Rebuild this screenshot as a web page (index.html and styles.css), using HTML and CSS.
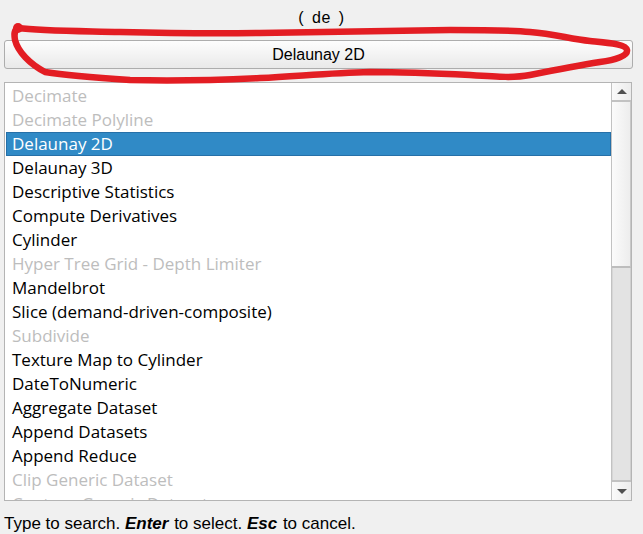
FILE: index.html
```html
<!DOCTYPE html>
<html>
<head>
<meta charset="utf-8">
<link rel="stylesheet" href="styles.css">
</head>
<body>
<div class="dialog">
  <div class="query">( de )</div>
  <div class="current-btn">Delaunay 2D</div>
  <div class="listbox">
    <div class="items">
      <div class="item disabled">Decimate</div>
      <div class="item disabled">Decimate Polyline</div>
      <div class="item selected">Delaunay 2D</div>
      <div class="item">Delaunay 3D</div>
      <div class="item">Descriptive Statistics</div>
      <div class="item">Compute Derivatives</div>
      <div class="item">Cylinder</div>
      <div class="item disabled">Hyper Tree Grid - Depth Limiter</div>
      <div class="item">Mandelbrot</div>
      <div class="item">Slice (demand-driven-composite)</div>
      <div class="item disabled">Subdivide</div>
      <div class="item">Texture Map to Cylinder</div>
      <div class="item">DateToNumeric</div>
      <div class="item">Aggregate Dataset</div>
      <div class="item">Append Datasets</div>
      <div class="item">Append Reduce</div>
      <div class="item disabled">Clip Generic Dataset</div>
      <div class="item disabled">Contour Generic Dataset</div>
    </div>
    <div class="scrollbar">
      <div class="arrow up"><span class="tri-up"></span></div>
      <div class="thumb"></div>
      <div class="track"></div>
      <div class="arrow down"><span class="tri-down"></span></div>
    </div>
  </div>
  <div class="hint">Type to search. <b>Enter</b>&nbsp;to select. <b>Esc</b>&nbsp;to cancel.</div>
</div>
<svg class="annotation" width="643" height="534" viewBox="0 0 643 534">
  <path d="M 18 28 C 40 31, 80 31, 120 32 C 160 33, 200 34, 260 33 C 340 32, 400 31, 450 30 C 480 30, 510 30, 530 32 C 555 34, 570 39, 590 41 C 610 43, 626 44, 627 50 C 628 56, 615 60, 600 62 C 575 66, 555 70, 530 75 C 515 78, 500 77, 470 75 C 430 73, 400 72, 370 72 C 330 73, 300 76, 260 78 C 220 80, 170 81, 130 80 C 100 78, 70 76, 45 72 C 30 64, 18 52, 15 40 C 14 34, 14 30, 18 28 Z" fill="none" stroke="#e31d23" stroke-width="6.5" stroke-linejoin="round" stroke-linecap="round"/>
  <circle cx="18" cy="28" r="5" fill="#e31d23"/>
</svg>
</body>
</html>
```

FILE: styles.css
```css
html, body {
  margin: 0;
  padding: 0;
  background: #f0f0f0;
}

.dialog {
  width: 643px;
  height: 534px;
  display: flex;
  flex-direction: column;
  font-family: "Liberation Sans", Arial, sans-serif;
  color: #000;
  position: relative;
}

.query {
  height: 40px;
  line-height: 36px;
  text-align: center;
  font-size: 16px;
  letter-spacing: 0.5px;
  word-spacing: 3px;
}

.current-btn {
  margin: 0 10px 0 4px;
  height: 27px;
  border: 1px solid #adadad;
  border-radius: 3px;
  background: linear-gradient(#fdfdfd, #e9e9e9);
  text-align: center;
  line-height: 27px;
  font-size: 16px;
}

.listbox {
  margin: 13px 11px 0 4px;
  height: 417px;
  border: 1px solid #b4b4b4;
  background: #fff;
  display: flex;
}

.items {
  flex: 1;
  overflow: hidden;
  padding-top: 1px;
  font-family: "Open Sans", "Noto Sans", sans-serif;
  font-size: 17px;
}

.item {
  height: 24px;
  line-height: 24px;
  padding-left: 7px;
  white-space: nowrap;
  color: #000;
}

.item.disabled {
  color: #bdbdbd;
}

.item.selected {
  margin-left: 1px;
  padding-left: 5px;
  background: #308ac6;
  border: 1px solid #2670a8;
  height: 22px;
  line-height: 22px;
  color: #fff;
}

.scrollbar {
  width: 19px;
  border-left: 1px solid #c2c2c2;
  display: flex;
  flex-direction: column;
  background: #e3e3e3;
}

.arrow {
  height: 19px;
  background: linear-gradient(90deg, #fafafa, #ececec);
  display: flex;
  align-items: center;
  justify-content: center;
}

.arrow.up {
  border-bottom: 2px solid #c2c2c2;
  height: 17px;
}

.arrow.down {
  border-top: 2px solid #c2c2c2;
  height: 18px;
}

.tri-up {
  width: 0;
  height: 0;
  border-left: 5px solid transparent;
  border-right: 5px solid transparent;
  border-bottom: 5px solid #505050;
}

.tri-down {
  width: 0;
  height: 0;
  border-left: 5px solid transparent;
  border-right: 5px solid transparent;
  border-top: 5px solid #505050;
}

.thumb {
  height: 164px;
  background: linear-gradient(90deg, #fbfbfb, #ededed);
  border-bottom: 2px solid #bdbdbd;
  border-right: 1px solid #c8c8c8;
}

.track {
  flex: 1;
  background: #e3e3e3;
  border-left: 1px solid #d6d6d6;
  border-right: 1px solid #d0d0d0;
}

.hint {
  margin-top: 13px;
  padding-left: 4px;
  font-size: 17px;
}

.hint b {
  font-style: italic;
  font-weight: bold;
  padding-right: 1px;
}

.annotation {
  position: absolute;
  left: 0;
  top: 0;
  pointer-events: none;
}
```
